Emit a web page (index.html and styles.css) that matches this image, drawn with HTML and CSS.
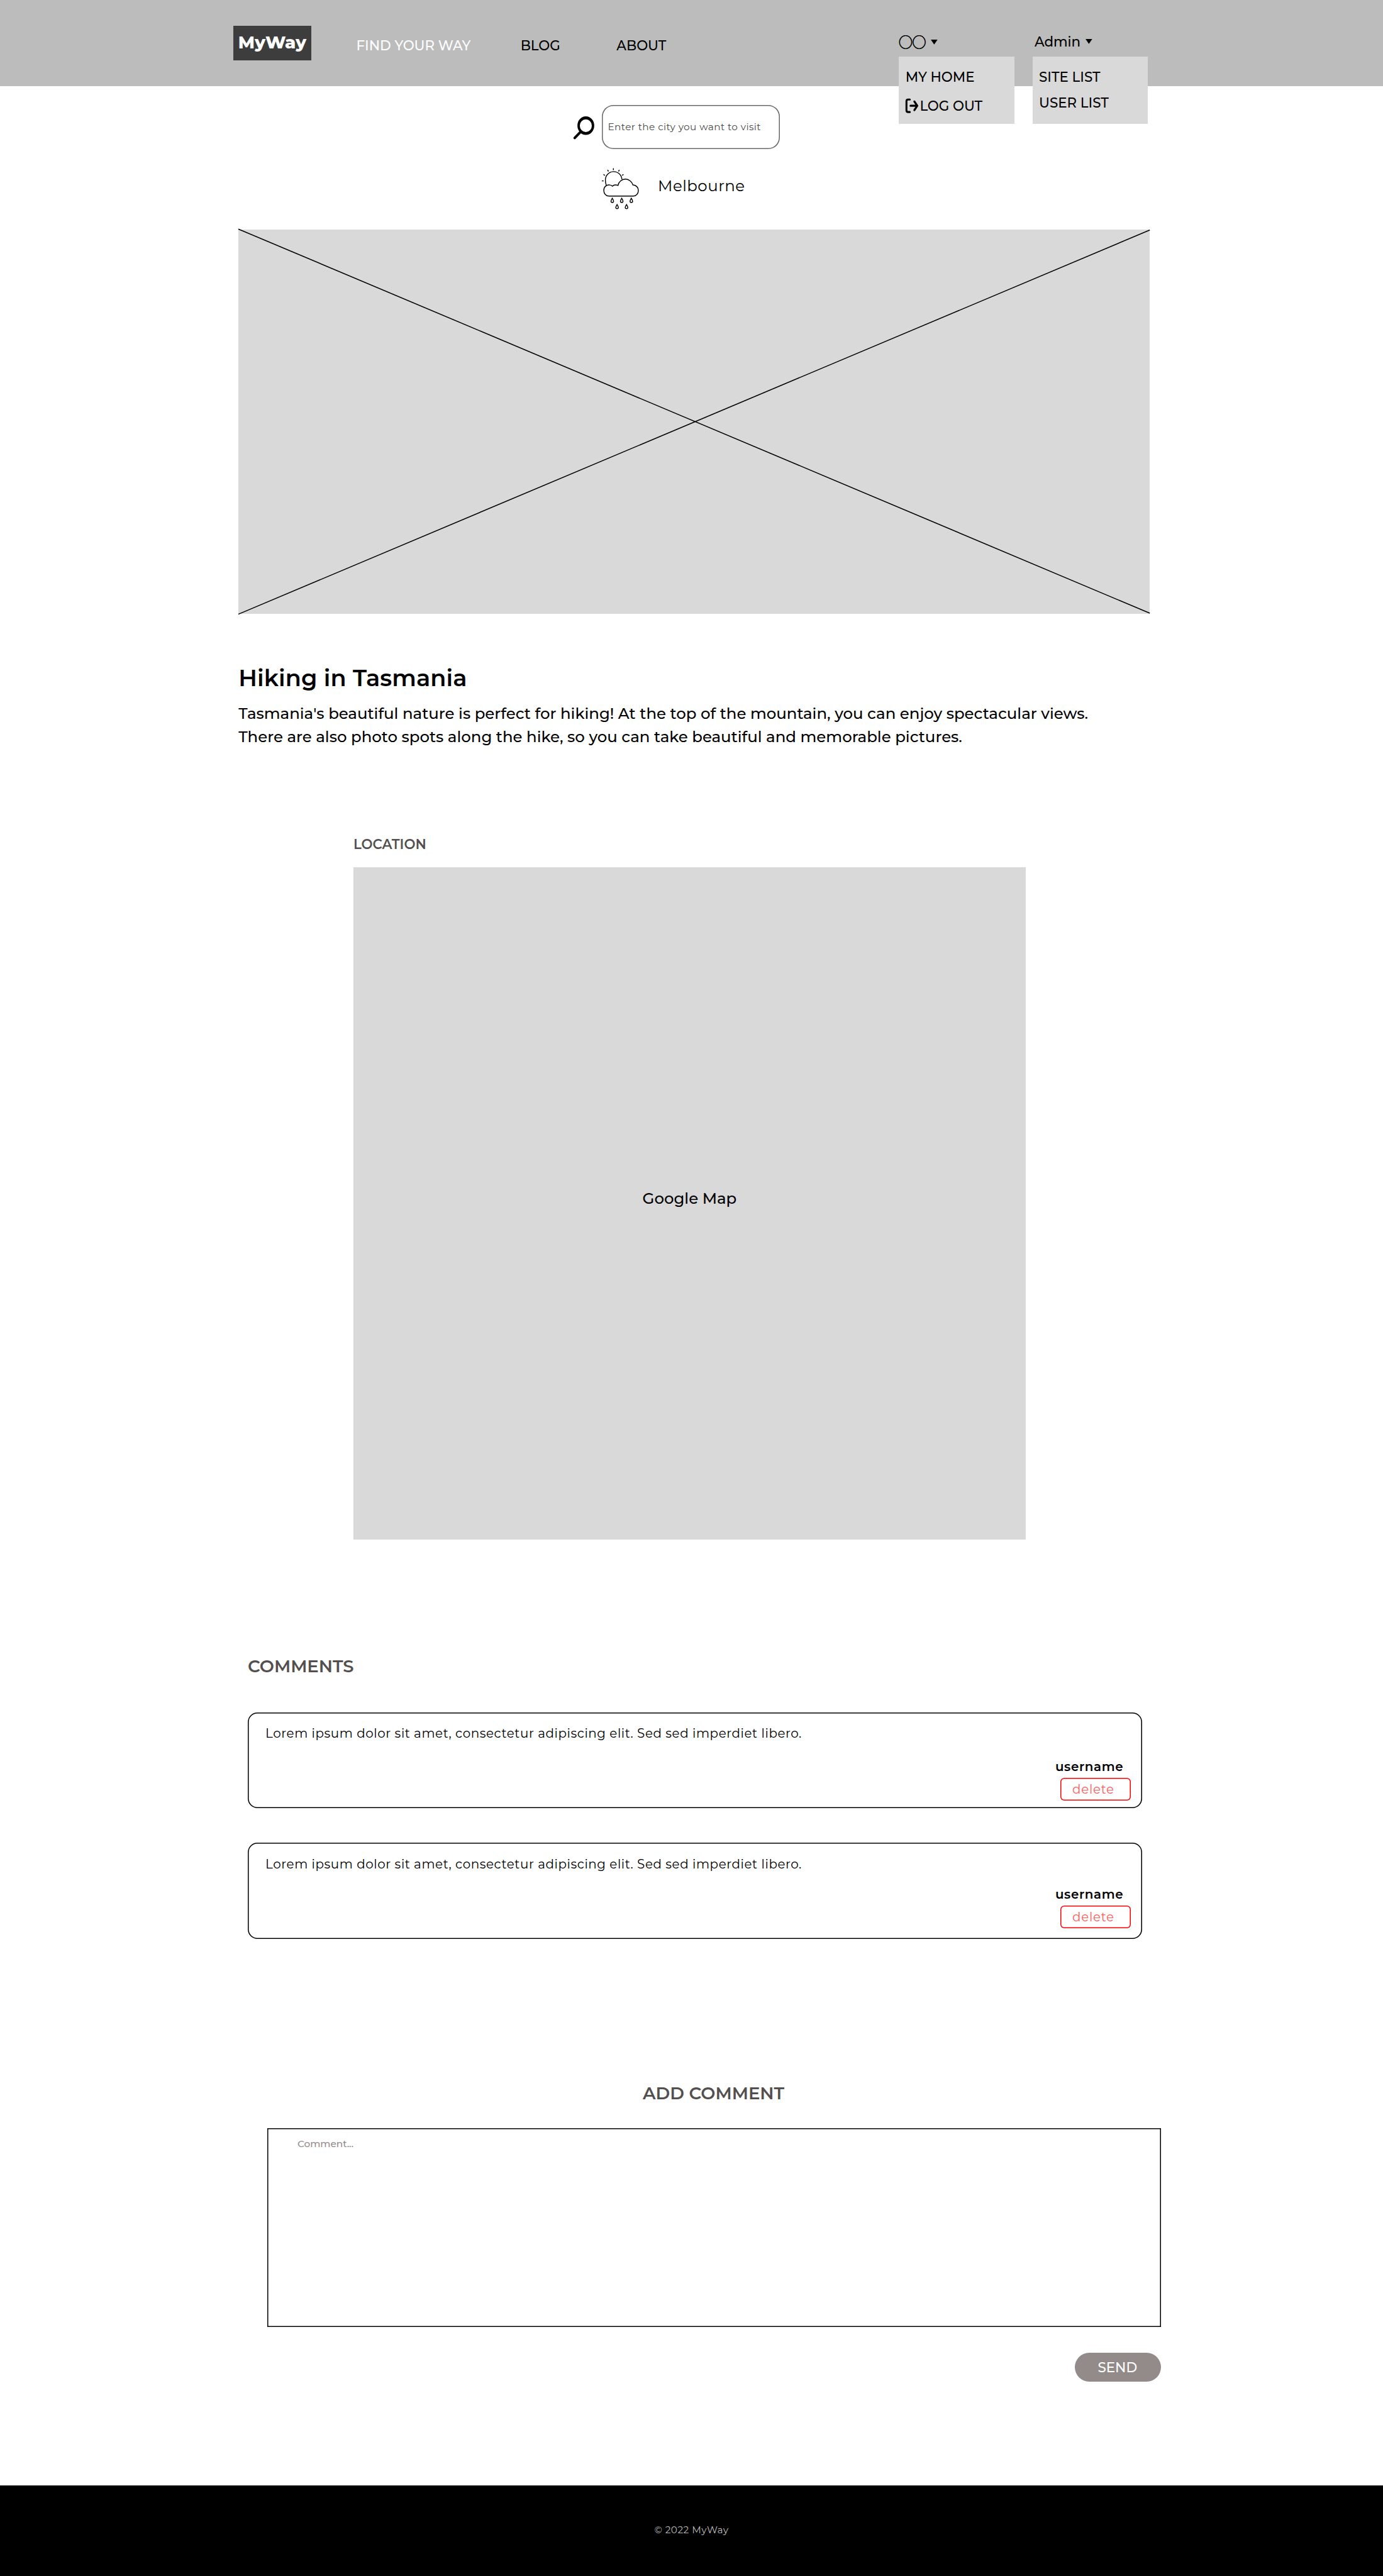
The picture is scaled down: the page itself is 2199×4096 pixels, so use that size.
FILE: index.html
```html
<!DOCTYPE html>
<html lang="en">
<head>
<meta charset="utf-8">
<title>MyWay</title>
<link rel="stylesheet" href="styles.css">
</head>
<body>
<header class="site-header">
  <a class="logo">MyWay</a>
  <nav class="nav">
    <a class="nav-link nav-link--active">FIND YOUR WAY</a>
    <a class="nav-link">BLOG</a>
    <a class="nav-link">ABOUT</a>
  </nav>
  <div class="menu menu--user">
    <div class="menu-toggle"><span class="menu-name menu-name--circles">◯◯</span><svg class="caret" viewBox="0 0 14 10"><path d="M0 0H14L7 10Z"/></svg></div>
    <ul class="dropdown">
      <li>MY HOME</li>
      <li class="logout"><svg class="logout-icon" viewBox="0 0 29 32"><path class="logout-frame" d="M10 3H6.500Q3 3 3 6.500V25.500Q3 29 6.500 29H10"/><path class="logout-arrow" d="M11.500 16H24M19.500 7L25.500 16L19.500 25"/></svg>LOG OUT</li>
    </ul>
  </div>
  <div class="menu menu--admin">
    <div class="menu-toggle"><span class="menu-name">Admin</span><svg class="caret" viewBox="0 0 14 10"><path d="M0 0H14L7 10Z"/></svg></div>
    <ul class="dropdown">
      <li>SITE LIST</li>
      <li>USER LIST</li>
    </ul>
  </div>
</header>

<main class="page">
  <div class="search">
    <svg class="search-icon" viewBox="102 128 129 143"><path fill-rule="evenodd" d="M126 186a52.500 58 0 1 0 105 0a52.500 58 0 1 0 -105 0zM141 186.500a37.500 39.500 0 1 1 75 0a37.500 39.500 0 1 1 -75 0z"/><path class="search-handle" d="M143 228L109 263"/></svg>
    <div class="search-box">Enter the city you want to visit</div>
  </div>
  <div class="weather">
    <svg class="weather-icon" viewBox="281 450 231 260">
      <path d="M309 559C303 545 303 532 303 527A51.500 51.500 0 0 1 406 522"/>
      <path d="M325 626H477C495 626 509 610 509 591C509 571 494 557 475 556C468 536 450 520 429 520C405 520 385 537 382 559C370 555 354 556 347 564C340 556 322 553 311 560C299 565 293 578 293 591C293 610 307 626 325 626Z"/>
      <path d="M353 452V464M317 462L322 472M390 462L385 472M291 491L300 497M416 491L407 497M281 531H292"/>
      <path d="M346 640c3 6 8 11 8 18a8 8 0 0 1 -16 0c0 -7 5 -12 8 -18zM405 640c3 6 8 11 8 18a8 8 0 0 1 -16 0c0 -7 5 -12 8 -18zM465 640c3 6 8 11 8 18a8 8 0 0 1 -16 0c0 -7 5 -12 8 -18zM376 679c3 6 8 11 8 18a8 8 0 0 1 -16 0c0 -7 5 -12 8 -18zM435 679c3 6 8 11 8 18a8 8 0 0 1 -16 0c0 -7 5 -12 8 -18z"/>
    </svg>
    <span class="weather-city">Melbourne</span>
  </div>

  <svg class="hero" viewBox="0 0 1898 800"><path d="M0 -1L1898 799M0 801L1898 1"/></svg>

  <section class="article">
    <h1 class="article-title">Hiking in Tasmania</h1>
    <p class="article-text">Tasmania's beautiful nature is perfect for hiking! At the top of the mountain, you can enjoy spectacular views.<br>There are also photo spots along the hike, so you can take beautiful and memorable pictures.</p>
  </section>

  <section class="location">
    <h2 class="location-title">LOCATION</h2>
    <div class="map">Google Map</div>
  </section>

  <section class="comments">
    <h2 class="section-title">COMMENTS</h2>
    <article class="comment">
      <p class="comment-text">Lorem ipsum dolor sit amet, consectetur adipiscing elit. Sed sed imperdiet libero.</p>
      <div class="comment-meta"><span class="comment-user">username</span><button class="delete">delete</button></div>
    </article>
    <article class="comment comment--last">
      <p class="comment-text">Lorem ipsum dolor sit amet, consectetur adipiscing elit. Sed sed imperdiet libero.</p>
      <div class="comment-meta"><span class="comment-user">username</span><button class="delete">delete</button></div>
    </article>
  </section>

  <section class="add-comment">
    <h2 class="section-title section-title--add">ADD COMMENT</h2>
    <div class="comment-field">Comment...</div>
    <button class="send">SEND</button>
  </section>
</main>

<footer class="site-footer">© 2022 MyWay</footer>
</body>
</html>
```
FILE: styles.css
```css
* { box-sizing: border-box; margin: 0; padding: 0; }
html { font-size: 76.354px; background: #fff; }
body {
  display: flex; flex-direction: column; min-height: 100vh;
  font-family: "Montserrat", "Inter", sans-serif; font-size: .28rem; line-height: .34rem;
  font-weight: 500; color: #000;
}
ul { list-style: none; }
button { border: 0; background: none; font: inherit; }
svg { display: block; flex: none; overflow: visible; }

.site-header {
  display: grid; grid-template-columns: 2.56rem 11.3rem 2.78rem 2.4rem;
  align-items: start; height: 1.8rem; padding-left: 4.86rem; background: #bcbcbc;
}
.logo {
  width: 1.62rem; height: .72rem; margin-top: .54rem; padding-bottom: .01rem;
  display: flex; align-items: center; justify-content: center;
  background: #3d3d3d; color: #fff; font-size: .36rem; font-weight: 800;
}
.nav { display: grid; grid-template-columns: 3.42rem 2rem auto; padding-top: .78rem; }
.nav-link--active { color: #fff; }

.menu { position: relative; }
.menu-toggle { display: flex; padding-top: .705rem; gap: .1rem; }
.menu--admin .menu-toggle { padding-left: .044rem; }
.menu-name--circles { margin-top: -.013rem; font-family: "Noto Sans CJK JP", sans-serif; -webkit-text-stroke: .009rem #000; }
.caret { width: .14rem; height: .1rem; margin-top: .11rem; }
.menu--user .caret { margin-top: .125rem; }
.dropdown {
  position: absolute; left: 0; top: 1.18rem; width: 2.4rem; height: 1.4rem;
  display: flex; flex-direction: column; padding: .262rem .138rem 0; background: #d9d9d9;
}
.menu--user .dropdown { gap: .26rem; }
.menu--admin .dropdown { gap: .2rem; }
.logout { display: flex; align-items: center; }
.logout-icon { width: .29rem; height: .32rem; margin: -.03rem .02rem 0 -.015rem; fill: none; stroke: #000; stroke-linecap: round; stroke-linejoin: round; }
.logout-frame { stroke-width: 4; }
.logout-arrow { stroke-width: 4.2; }

.search { display: flex; align-items: center; margin: .39rem 0 0 11.94rem; }
.search-icon { width: .43rem; height: .477rem; margin: .03rem .17rem 0 0; }
.search-handle { fill: none; stroke: #000; stroke-width: 16; stroke-linecap: round; }
.search-box {
  display: flex; align-items: center; width: 3.7rem; height: .92rem; padding-left: .118rem;
  border-radius: .24rem; box-shadow: inset 0 0 0 .02rem #696969;
  font-size: .2rem; font-weight: 400; letter-spacing: .0275em; color: #4a4a4a;
}
.weather { display: flex; align-items: flex-start; gap: .4rem; margin: .39rem 0 0 12.53rem; }
.weather-icon { width: .77rem; height: .867rem; fill: none; stroke: #000; stroke-width: 5.6; }
.weather-city { margin-top: .21rem; font-size: .32rem; font-weight: 400; letter-spacing: .022em; }

.hero { width: 18.98rem; height: 8rem; margin: .413rem 0 0 4.96rem; background: #d9d9d9; fill: none; stroke: #000; stroke-width: 2; }

.article { margin: 1.046rem 0 0 4.967rem; }
.article-title { font-size: .48rem; line-height: .58rem; font-weight: 600; letter-spacing: .003em; }
.article-text { margin-top: .21rem; font-size: .32rem; line-height: .48rem; }

.location { margin: 1.85rem 0 0 7.36rem; }
.location-title { font-size: .28rem; line-height: .34rem; font-weight: 600; color: #544f4f; }
.map {
  display: flex; align-items: center; justify-content: center;
  width: 14rem; height: 14rem; margin-top: .295rem; padding-bottom: .205rem;
  background: #d9d9d9; font-size: .32rem;
}

.comments { margin: 2.42rem 0 0 5.16rem; }
.section-title { font-size: .36rem; line-height: .44rem; font-weight: 600; color: #544f4f; }
.comment {
  display: flex; flex-direction: column; justify-content: space-between;
  width: 18.62rem; height: 2rem; margin-top: .74rem; padding: .283rem .233rem .16rem .368rem;
  border-radius: .2rem; box-shadow: inset 0 0 0 .02rem #000; font-size: .26rem; line-height: .32rem;
}
.comment--last { margin-top: .72rem; padding-bottom: .22rem; }
.comment-text { font-weight: 400; letter-spacing: .03em; }
.comment-meta { display: flex; flex-direction: column; align-items: flex-start; gap: .066rem; width: 1.572rem; margin-left: auto; }
.comment-user { font-weight: 600; letter-spacing: .033em; }
.delete {
  width: 1.463rem; height: .48rem; margin-left: .108rem; padding: .012rem 0 0 .247rem; text-align: left;
  border-radius: .08rem; box-shadow: inset 0 0 0 .02rem #f00; color: #ff5c5c; font-weight: 400; letter-spacing: .037em;
}

.add-comment { display: flex; flex-direction: column; width: 18.62rem; margin: 3.001rem 0 0 5.56rem; }
.section-title--add { margin-left: 7.825rem; }
.comment-field {
  height: 4.14rem; margin-top: .499rem; padding: .215rem .634rem; box-shadow: inset 0 0 0 .02rem #000;
  font-size: .2rem; line-height: .24rem; color: #938b8b;
}
.send { align-self: flex-end; width: 1.8rem; height: .6rem; margin-top: .54rem; padding: .018rem .02rem 0 0; border-radius: .3rem; background: #938a8a; color: #fff; }

.site-footer {
  flex: 1; display: flex; align-items: center; justify-content: center; margin-top: 2.16rem; padding-bottom: .025rem;
  background: #000; color: #b9b9b9; font-size: .2rem; font-weight: 400; letter-spacing: .031em;
}
```
